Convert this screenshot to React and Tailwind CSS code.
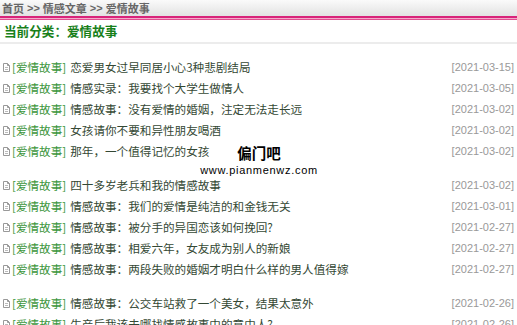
import React from 'react';

const groups = [
    [
        ['恋爱男女过早同居小心3种悲剧结局', '2021-03-15'],
        ['情感实录：我要找个大学生做情人', '2021-03-05'],
        ['情感故事：没有爱情的婚姻，注定无法走长远', '2021-03-02'],
        ['女孩请你不要和异性朋友喝酒', '2021-03-02'],
        ['那年，一个值得记忆的女孩', '2021-03-02'],
    ],
    [
        ['四十多岁老兵和我的情感故事', '2021-03-02'],
        ['情感故事：我们的爱情是纯洁的和金钱无关', '2021-03-01'],
        ['情感故事：被分手的异国恋该如何挽回?', '2021-02-27'],
        ['情感故事：相爱六年，女友成为别人的新娘', '2021-02-27'],
        ['情感故事：两段失败的婚姻才明白什么样的男人值得嫁', '2021-02-27'],
    ],
    [
        ['情感故事：公交车站救了一个美女，结果太意外', '2021-02-26'],
        ['生产后我该去哪找情感故事中的意中人?', '2021-02-26'],
    ],
];

const DocIcon = () => (
    <svg width="7" height="9" viewBox="0 0 7 9" className="shrink-0">
        <path d="M0.5 0.5h4l2 2v6h-6z" fill="#fff" stroke="#999" />
        <path d="M4.5 0.5v2h2" fill="none" stroke="#999" />
        <path d="M2 4.5h3M2 6.5h3" stroke="#bbb" />
    </svg>
);

const Row = ({ title, date }) => (
    <div className="flex items-center h-[21px] pl-[3px] pr-[3px]">
        <DocIcon />
        <a className="ml-[2px] text-[11.6px] text-[#3c963c] whitespace-nowrap">[爱情故事]</a>
        <a className="ml-[4px] text-[11.6px] text-[#344834] whitespace-nowrap">{title}</a>
        <span className="ml-auto text-[11px] text-[#999] font-['Liberation_Sans',sans-serif]">[{date}]</span>
    </div>
);

export default function App() {
    return (
        <div className="relative w-[517px] h-[325px] overflow-hidden bg-white font-['Noto_Sans_CJK_SC','Noto_Sans',sans-serif]">
            <div className="h-[16px] bg-gradient-to-b from-[#fafafa] to-[#e2e2e2] flex items-center pl-[2px] text-[11px] font-bold text-[#666] leading-none">
                首页 <span className="font-['Liberation_Sans',sans-serif] mx-[3px]">&gt;&gt;</span> 情感文章 <span className="font-['Liberation_Sans',sans-serif] mx-[3px]">&gt;&gt;</span> 爱情故事
            </div>
            <div className="h-[2px] bg-[#d8237a]" />
            <div className="h-[1px] bg-[#f4a9c8]" />
            <div className="h-[1px] bg-[#e04d8f]" />
            <div className="h-[24px] flex items-center pl-[4px] text-[12.6px] font-bold text-[#18801a] border-b-2 border-[#ececec]">
                当前分类：爱情故事
            </div>
            <div className="pt-[13px] flex flex-col gap-[13px]">
                {groups.map((g, i) => (
                    <div key={i}>
                        {g.map(([t, d]) => <Row key={t} title={t} date={d} />)}
                    </div>
                ))}
            </div>
            <div className="absolute left-[203px] top-[143px] w-[112px] flex flex-col items-center text-black">
                <span className="text-[14.5px] font-bold leading-[20px]">偏门吧</span>
                <span className="text-[11px] tracking-[0.7px] leading-[15px] font-['Liberation_Sans',sans-serif]">www.pianmenwz.com</span>
            </div>
        </div>
    );
}
